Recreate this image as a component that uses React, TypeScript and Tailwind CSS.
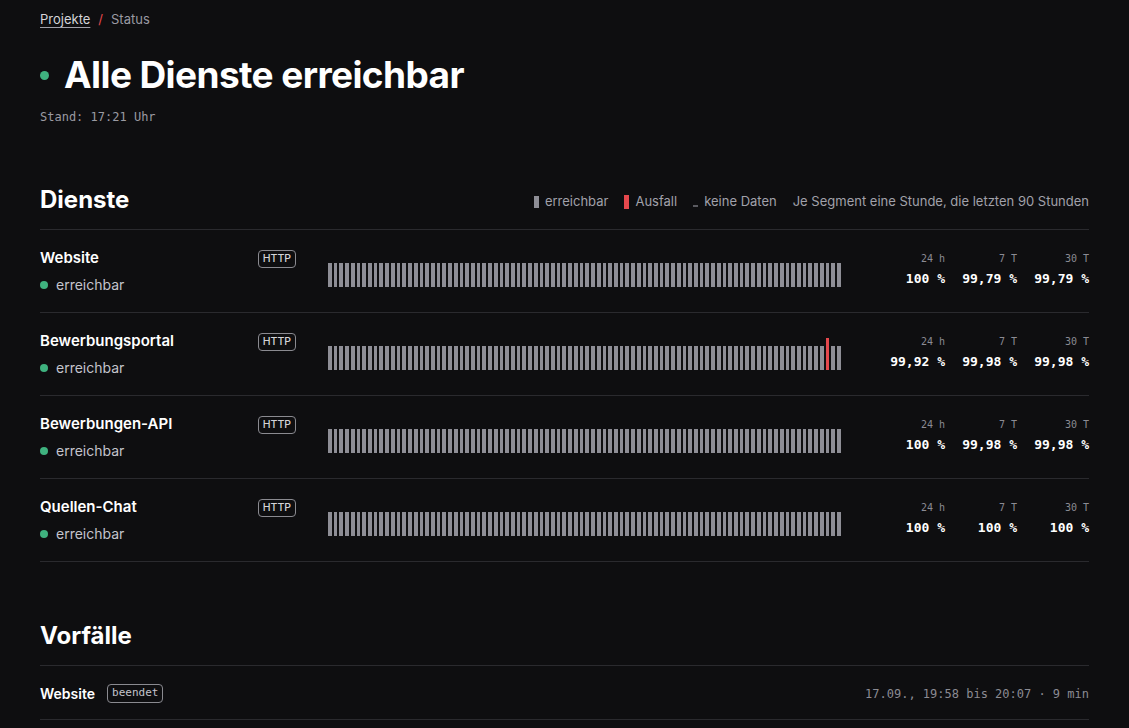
import React from 'react';

type Service = {
  name: string;
  type: string;
  uptime: [string, string, string];
  outages: number[];
};

const services: Service[] = [
  { name: 'Website', type: 'HTTP', uptime: ['100 %', '99,79 %', '99,79 %'], outages: [] },
  { name: 'Bewerbungsportal', type: 'HTTP', uptime: ['99,92 %', '99,98 %', '99,98 %'], outages: [87] },
  { name: 'Bewerbungen-API', type: 'HTTP', uptime: ['100 %', '99,98 %', '99,98 %'], outages: [] },
  { name: 'Quellen-Chat', type: 'HTTP', uptime: ['100 %', '100 %', '100 %'], outages: [] },
];

const periods = ['24 h', '7 T', '30 T'];
const mono = "font-['DejaVu_Sans_Mono','Liberation_Mono',monospace]";

const Bar = ({ outages }: { outages: number[] }) => (
  <div className="flex items-end gap-[2px] h-8">
    {Array.from({ length: 90 }).map((_, i) =>
      outages.includes(i) ? (
        <div key={i} className="flex-1 h-8 bg-[#e5484d]" />
      ) : (
        <div key={i} className="flex-1 h-6 bg-[#8e8e96]" />
      )
    )}
  </div>
);

const ServiceRow = ({ service }: { service: Service }) => (
  <div className="grid grid-cols-[256px_1fr_216px] gap-8 items-center border-b border-[#2a2a2e] pt-[18px] pb-[17px]">
    {/* Name + Status */}
    <div className="flex justify-between items-start">
      <div>
        <p className="text-[15px] leading-5 font-semibold text-white">{service.name}</p>
        <div className="flex items-center gap-2 mt-[7px] text-sm leading-5 text-[#c4c4cc]">
          <span className="w-2 h-2 rounded-full bg-[#3fb27f]" />
          <span>erreichbar</span>
        </div>
      </div>
      <span className="mt-[2px] px-1 h-[18px] flex items-center text-[10.5px] font-medium text-[#d4d4d8] border border-[#8a8a90] rounded">
        {service.type}
      </span>
    </div>

    {/* Segmente */}
    <div className="-mt-0.5">
      <Bar outages={service.outages} />
    </div>

    {/* Verfügbarkeit */}
    <div className={`grid grid-cols-3 ${mono} -mt-1`}>
      {periods.map((p, i) => (
        <div key={p} className="text-right">
          <p className="text-[10px] leading-4 text-[#8b8b93]">{p}</p>
          <p className="text-[13px] leading-5 font-bold text-white mt-0.5">{service.uptime[i]}</p>
        </div>
      ))}
    </div>
  </div>
);

export default function App() {
  return (
    <div className="min-h-screen bg-[#0e0e10] text-white font-['Inter','Noto_Sans',sans-serif]">
      <div className="px-10 pt-[9px] pb-16">
        {/* Breadcrumb */}
        <nav className="flex items-center gap-2 text-[13px] leading-5">
          <a className="text-[#d4d4d8] underline underline-offset-[3px] decoration-[#a1a1aa]">Projekte</a>
          <span className="text-[#e5484d]">/</span>
          <span className="text-[#9a9aa2]">Status</span>
        </nav>

        {/* Titel */}
        <div className="flex items-center gap-[15px] mt-[22px]">
          <span className="w-[9px] h-[9px] rounded-full bg-[#3fb27f]" />
          <h1 className="text-[37px] leading-[48px] font-bold tracking-[-0.6px]">Alle Dienste erreichbar</h1>
        </div>
        <p className={`${mono} text-[12px] leading-4 text-[#9a9aa2] mt-[10px]`}>Stand: 17:21 Uhr</p>

        {/* Dienste */}
        <section className="mt-[59px]">
          <div className="flex items-center justify-between border-b border-[#2a2a2e] pb-[13px]">
            <h2 className="text-[24px] leading-8 font-bold">Dienste</h2>
            <div className="flex items-center gap-4 pt-1 text-[13px] text-[#a1a1aa]">
              <span className="flex items-center gap-1.5">
                <span className="w-[5px] h-3 bg-[#8e8e96]" />
                erreichbar
              </span>
              <span className="flex items-center gap-1.5">
                <span className="w-[5px] h-[14px] bg-[#e5484d]" />
                Ausfall
              </span>
              <span className="flex items-center gap-1.5">
                <span className="w-[5px] h-[2px] bg-[#5a5a60] mt-2" />
                keine Daten
              </span>
              <span>Je Segment eine Stunde, die letzten 90 Stunden</span>
            </div>
          </div>

          {services.map((s) => (
            <ServiceRow key={s.name} service={s} />
          ))}
        </section>

        {/* Vorfälle */}
        <section className="mt-[58px]">
          <h2 className="text-[24px] leading-8 font-bold border-b border-[#2a2a2e] pb-[13px]">Vorfälle</h2>
          <div className="flex items-center justify-between border-b border-[#2a2a2e] pt-[17px] pb-[15px]">
            <div className="flex items-center gap-3">
              <span className="text-[14px] font-semibold">Website</span>
              <span className={`${mono} text-[11px] px-1 h-[19px] flex items-center text-[#c4c4cc] border border-[#8a8a90] rounded`}>
                beendet
              </span>
            </div>
            <span className={`${mono} text-[12px] text-[#8b8b93]`}>17.09., 19:58 bis 20:07 · 9 min</span>
          </div>
        </section>
      </div>
    </div>
  );
}
